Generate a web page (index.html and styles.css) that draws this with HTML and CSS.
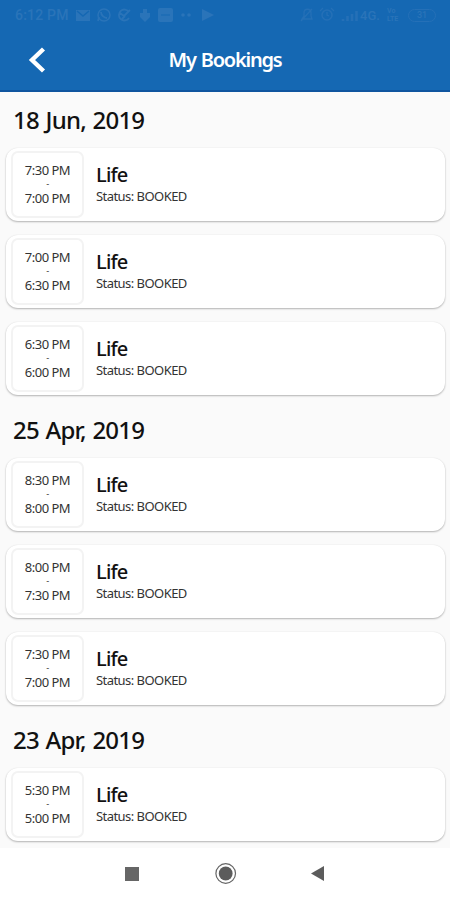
FILE: index.html
```html
<!DOCTYPE html>
<html lang="en">
<head>
  <meta charset="UTF-8" />
  <meta name="viewport" content="width=device-width, initial-scale=1.0" />
  <title>My Bookings</title>
  <link rel="stylesheet" href="styles.css">
</head>
<body>
  <header class="header">
    <div class="status-bar">
      <span class="clock">6:12 PM</span>
      <svg class="status-left" width="140" height="18" viewBox="0 0 140 18" fill="currentColor" stroke="currentColor">
        <path stroke="none" d="M0 4h14v11H0z" />
        <path d="M1 5l6 5 6-5" fill="none" stroke="#1568b3" stroke-width="1.5" />
        <circle cx="28" cy="9" r="6" fill="none" stroke-width="1.5" />
        <path d="M22 15l1-4M25 6c0 3 3 6 6 6" fill="none" stroke-width="1.8" />
        <path d="M53 6a5.5 5.5 0 1 0 0 6M44 7l4 3 6-6M46 13l3-3" fill="none" stroke-width="1.8" />
        <path stroke="none" d="M67 3h4v4h3v4l-5 5-5-5V7h3z" />
        <rect x="82" y="2" width="15" height="14" rx="2" stroke="none" />
        <path d="M85 9h9" stroke="#1568b3" stroke-width="1" />
        <circle cx="107" cy="9" r="1.8" stroke="none" />
        <circle cx="113" cy="9" r="1.8" stroke="none" />
        <path stroke="none" d="M126 3l12 6-12 6z" />
      </svg>
      <svg class="status-right" width="60" height="18" viewBox="0 0 60 18" fill="none" stroke="currentColor">
        <path d="M2 13h10l-1-3V7c0-5-7-5-7 0v3zM1 15L12 3" stroke-width="1.3" />
        <circle cx="27" cy="9" r="5" stroke-width="1.5" />
        <path d="M20 5l3-3M34 5l-3-3M27 6v3l2 1" stroke-width="1.3" />
        <path d="M43 15v-2M47.5 15v-5M52 15V8M56.5 15V5" stroke-width="2.6" />
      </svg>
      <span class="network">4G.</span>
      <span class="volte">Vo<br>LTE</span>
      <span class="battery">31</span>
    </div>
    <div class="title-bar">
      <svg class="back" width="18" height="26" viewBox="0 0 18 26">
        <path d="M15.5 2L4 13l11.5 11" fill="none" stroke="#fff" stroke-width="4.4" />
      </svg>
      <h1>My Bookings</h1>
    </div>
  </header>

  <main class="bookings">
    <section>
      <h2>18 Jun, 2019</h2>
      <div class="card">
        <div class="time"><span>7:30 PM</span><i>-</i><span>7:00 PM</span></div>
        <div class="info"><h3>Life</h3><p>Status: BOOKED</p></div>
      </div>
      <div class="card">
        <div class="time"><span>7:00 PM</span><i>-</i><span>6:30 PM</span></div>
        <div class="info"><h3>Life</h3><p>Status: BOOKED</p></div>
      </div>
      <div class="card">
        <div class="time"><span>6:30 PM</span><i>-</i><span>6:00 PM</span></div>
        <div class="info"><h3>Life</h3><p>Status: BOOKED</p></div>
      </div>
    </section>

    <section>
      <h2>25 Apr, 2019</h2>
      <div class="card">
        <div class="time"><span>8:30 PM</span><i>-</i><span>8:00 PM</span></div>
        <div class="info"><h3>Life</h3><p>Status: BOOKED</p></div>
      </div>
      <div class="card">
        <div class="time"><span>8:00 PM</span><i>-</i><span>7:30 PM</span></div>
        <div class="info"><h3>Life</h3><p>Status: BOOKED</p></div>
      </div>
      <div class="card">
        <div class="time"><span>7:30 PM</span><i>-</i><span>7:00 PM</span></div>
        <div class="info"><h3>Life</h3><p>Status: BOOKED</p></div>
      </div>
    </section>

    <section>
      <h2>23 Apr, 2019</h2>
      <div class="card">
        <div class="time"><span>5:30 PM</span><i>-</i><span>5:00 PM</span></div>
        <div class="info"><h3>Life</h3><p>Status: BOOKED</p></div>
      </div>
    </section>
  </main>

  <nav class="nav-bar">
    <svg width="14" height="14" viewBox="0 0 14 14"><rect width="14" height="14" fill="#666" /></svg>
    <svg width="22" height="22" viewBox="0 0 22 22">
      <circle cx="10.7" cy="10.5" r="9.8" fill="none" stroke="#666" stroke-width="1.2" />
      <circle cx="10.7" cy="10.5" r="6.9" fill="#5c5c5c" />
    </svg>
    <svg width="14" height="16" viewBox="0 0 14 16"><path d="M0 7.5L13 0v15z" fill="#5c5c5c" /></svg>
  </nav>
</body>
</html>
```
FILE: styles.css
```css
* {
  box-sizing: border-box;
}
body {
  margin: 0;
  height: 900px;
  display: flex;
  flex-direction: column;
  overflow: hidden;
  background: #fafafa;
  color: #111;
  font-family: "Noto Sans", "Open Sans", sans-serif;
}
h1, h2, h3, p {
  margin: 0;
}
.header {
  flex: none;
  height: 92px;
  background: #1568b3;
  border-bottom: 2px solid #0f559f;
}
.status-bar {
  display: flex;
  align-items: center;
  height: 30px;
  padding: 0 14px 0 15px;
  color: #2a74b9;
}
.status-bar > * {
  flex: none;
}
.clock {
  width: 61px;
  font: 500 14px Roboto, sans-serif;
  letter-spacing: 0.2px;
}
.status-right {
  margin-left: auto;
  color: #2570b7;
}
.network {
  width: 27px;
  font: 500 13px Roboto, sans-serif;
}
.volte {
  width: 21px;
  font: bold 7px/8px Roboto, sans-serif;
}
.battery {
  width: 28px;
  height: 13px;
  border: 1.5px solid #2570b7;
  border-radius: 7px;
  font: 500 9px/11px Roboto, sans-serif;
  text-align: center;
}
.title-bar {
  display: grid;
  grid-template-columns: 60px 1fr 60px;
  align-items: center;
  height: 59px;
}
.back {
  margin-left: 28px;
}
h1 {
  color: #fff;
  font-size: 20px;
  font-weight: 600;
  letter-spacing: -1.2px;
  word-spacing: 1px;
  text-align: center;
}
.bookings {
  flex: 1;
  min-height: 0;
  padding: 7px 5px 0 6px;
}
h2 {
  height: 49px;
  padding-left: 7px;
  font-size: 24px;
  font-weight: 500;
  line-height: 41px;
  letter-spacing: -0.8px;
  word-spacing: 1.2px;
}
.card {
  display: flex;
  align-items: center;
  height: 73px;
  margin-bottom: 14px;
  padding-left: 5px;
  border-radius: 12px;
  background: #fff;
  box-shadow: 0 1px 2px rgba(0, 0, 0, 0.28), 0 0 2px rgba(0, 0, 0, 0.06);
}
.time {
  display: flex;
  flex-direction: column;
  align-items: center;
  width: 73px;
  height: 67px;
  padding-top: 8px;
  border: 2px solid #f3f3f3;
  border-radius: 7px;
  color: #333;
  font-size: 13px;
  line-height: 18px;
  letter-spacing: -0.5px;
}
.time i {
  font: 9px/10px "Liberation Sans", sans-serif;
}
.info {
  padding-left: 12px;
}
h3 {
  font-size: 20px;
  font-weight: 500;
  line-height: 24px;
  letter-spacing: -0.8px;
}
.info p {
  color: #333;
  font-size: 13px;
  line-height: 19px;
  letter-spacing: -0.55px;
}
.nav-bar {
  flex: none;
  display: flex;
  align-items: center;
  height: 52px;
  padding-left: 125px;
  background: #fff;
}
.nav-bar svg + svg {
  margin-left: 76px;
}
.nav-bar svg:last-child {
  margin-left: 74px;
}
```
